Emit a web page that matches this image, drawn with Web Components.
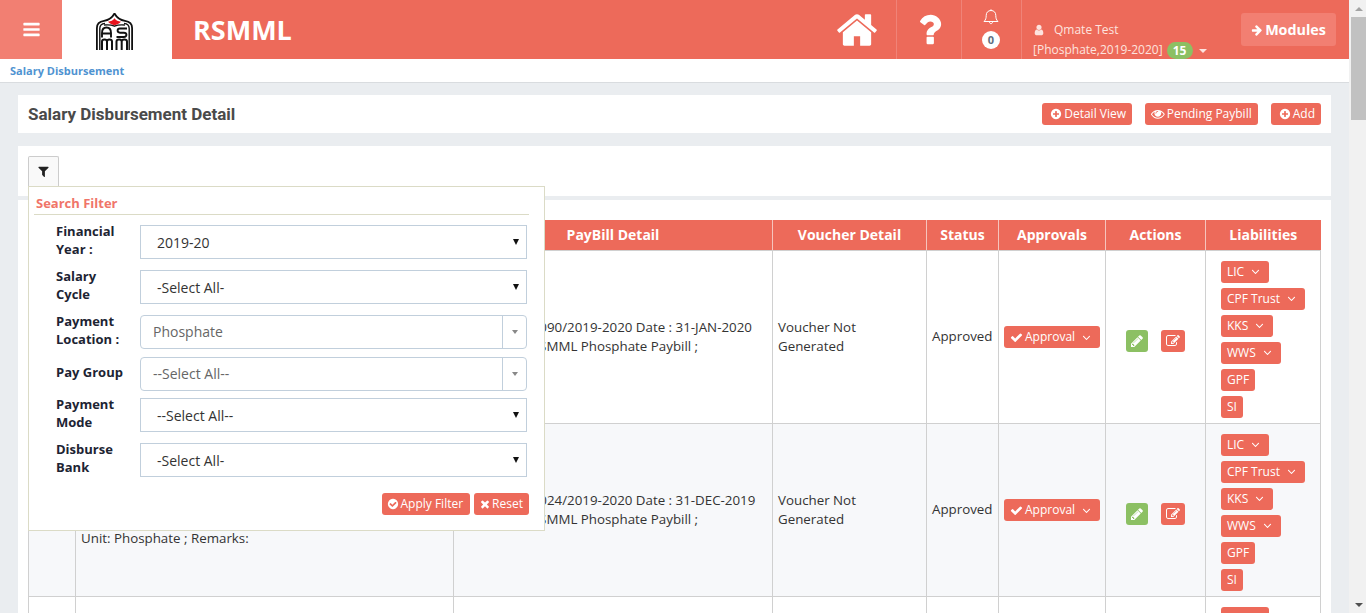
<!DOCTYPE html>
<html>
<head>
<meta charset="utf-8">
<title>Salary Disbursement</title>
<style>
  html, body { margin: 0; padding: 0; height: 100%; overflow: hidden; }
  body { font-family: "Open Sans", sans-serif; font-size: 13px; color: #333; }
</style>
</head>
<body>
<app-shell>
  <app-header></app-header>
  <crumb-bar>Salary Disbursement</crumb-bar>
  <page-body>
    <title-card></title-card>
    <filter-card></filter-card>
    <disbursement-table></disbursement-table>
  </page-body>
</app-shell>

<script>
// font awesome 4 style glyphs, all on a 1792 box
const ICONS = {
  bars: 'M1664 1344v128q0 26-19 45t-45 19h-1408q-26 0-45-19t-19-45v-128q0-26 19-45t45-19h1408q26 0 45 19t19 45zm0-512v128q0 26-19 45t-45 19h-1408q-26 0-45-19t-19-45v-128q0-26 19-45t45-19h1408q26 0 45 19t19 45zm0-512v128q0 26-19 45t-45 19h-1408q-26 0-45-19t-19-45v-128q0-26 19-45t45-19h1408q26 0 45 19t19 45z',
  home: 'M1472 992v480q0 26-19 45t-45 19h-384v-384h-256v384h-384q-26 0-45-19t-19-45v-480q0-1 .5-3t.5-3l575-474 575 474q1 2 1 6zm223-69l-62 74q-8 9-21 11h-3q-13 0-21-7l-692-577-692 577q-12 8-24 7-13-2-21-11l-62-74q-8-10-7-23.5t11-21.5l719-599q32-26 76-26t76 26l244 204v-195q0-14 9-23t23-9h192q14 0 23 9t9 23v408l219 182q10 8 11 21.5t-7 23.5z',
  question: 'M1088 1256v240q0 16-12 28t-28 12h-240q-16 0-28-12t-12-28v-240q0-16 12-28t28-12h240q16 0 28 12t12 28zm316-600q0 54-15.5 101t-35 76.5-55 59.5-57.5 43.5-61 35.5q-41 23-68.5 65t-27.5 67q0 17-12 32.5t-28 15.5h-240q-15 0-25.5-18.5t-10.5-37.5v-45q0-83 65-156.5t143-108.5q59-27 84-56t25-76q0-42-46.5-74t-107.5-32q-65 0-108 29-35 25-107 115-13 16-31 16-12 0-25-8l-164-125q-13-10-15.5-25t5.5-28q160-266 464-266 80 0 161 31t146 83 106 127.5 41 158.5z',
  user: 'M1536 1399q0 109-62.5 187t-150.5 78h-854q-88 0-150.5-78t-62.5-187q0-85 8.5-160.5t31.5-152 58.5-131 94-89 134.5-34.5q131 128 313 128t313-128q76 0 134.5 34.5t94 89 58.5 131 31.5 152 8.5 160.5zm-256-887q0 159-112.5 271.5t-271.5 112.5-271.5-112.5-112.5-271.5 112.5-271.5 271.5-112.5 271.5 112.5 112.5 271.5z',
  arrow: 'M1600 960q0 54-37 91l-651 651q-39 37-91 37-51 0-90-37l-75-75q-38-38-38-91t38-91l293-293h-704q-52 0-84.5-37.5t-32.5-90.5v-128q0-53 32.5-90.5t84.5-37.5h704l-293-294q-38-36-38-90t38-90l75-75q38-38 90-38 53 0 91 38l651 651q37 35 37 90z',
  plus: 'M1344 960v-128q0-26-19-45t-45-19h-256v-256q0-26-19-45t-45-19h-128q-26 0-45 19t-19 45v256h-256q-26 0-45 19t-19 45v128q0 26 19 45t45 19h256v256q0 26 19 45t45 19h128q26 0 45-19t19-45v-256h256q26 0 45-19t19-45zm320-64q0 209-103 385.5t-279.5 279.5-385.5 103-385.5-103-279.5-279.5-103-385.5 103-385.5 279.5-279.5 385.5-103 385.5 103 279.5 279.5 103 385.5z',
  eye: 'M1664 960q-152-236-381-353 61 104 61 225 0 185-131.5 316.5t-316.5 131.5-316.5-131.5-131.5-316.5q0-121 61-225-229 117-381 353 133 205 333.5 326.5t434.5 121.5 434.5-121.5 333.5-326.5zm-720-384q0-20-14-34t-34-14q-125 0-214.5 89.5t-89.5 214.5q0 20 14 34t34 14 34-14 14-34q0-86 61-147t147-61q20 0 34-14t14-34zm848 384q0 34-20 69-140 230-376.5 368.5t-499.5 138.5-499.5-139-376.5-368q-20-35-20-69t20-69q140-229 376.5-368t499.5-139 499.5 139 376.5 368q20 35 20 69z',
  filter: 'M1595 295q17 41-14 70l-493 493v742q0 42-39 59-13 5-25 5-27 0-45-19l-256-256q-19-19-19-45v-486l-493-493q-31-29-14-70 17-39 59-39h1280q42 0 59 39z',
  check: 'M1671 566q0 40-28 68l-724 724-136 136q-28 28-68 28t-68-28l-136-136-362-362q-28-28-28-68t28-68l136-136q28-28 68-28t68 28l294 295 656-657q28-28 68-28t68 28l136 136q28 28 28 68z',
  checkCircle: 'M1412 734q0-28-18-46l-91-90q-19-19-45-19t-45 19l-408 407-226-226q-19-19-45-19t-45 19l-91 90q-18 18-18 46 0 27 18 45l362 362q19 19 45 19 27 0 46-19l543-543q18-18 18-45zm252 162q0 209-103 385.5t-279.5 279.5-385.5 103-385.5-103-279.5-279.5-103-385.5 103-385.5 279.5-279.5 385.5-103 385.5 103 279.5 279.5 103 385.5z',
  times: 'M1490 1322q0 40-28 68l-136 136q-28 28-68 28t-68-28l-294-294-294 294q-28 28-68 28t-68-28l-136-136q-28-28-28-68t28-68l294-294-294-294q-28-28-28-68t28-68l136-136q28-28 68-28t68 28l294 294 294-294q28-28 68-28t68 28l136 136q28 28 28 68t-28 68l-294 294 294 294q28 28 28 68z',
  pencil: 'M491 1536l91-91-235-235-91 91v107h128v128h107zm523-928q0-22-22-22-10 0-17 7l-542 542q-7 7-7 17 0 22 22 22 10 0 17-7l542-542q7-7 7-17zm-54-192l416 416-832 832h-416v-416zm683 96q0 53-37 90l-166 166-416-416 166-165q36-38 90-38 53 0 91 38l235 234q37 39 37 91z',
  edit: 'M888 1184l116-116-152-152-116 116v56h96v96h56zm440-720q-16-16-33 1l-350 350q-17 17-1 33t33-1l350-350q17-17 1-33zm80 594v190q0 119-84.5 203.5t-203.5 84.5h-832q-119 0-203.5-84.5t-84.5-203.5v-832q0-119 84.5-203.5t203.5-84.5h832q63 0 117 25 15 7 18 23 3 17-9 29l-49 49q-14 14-32 8-23-6-45-6h-832q-66 0-113 47t-47 113v832q0 66 47 113t113 47h832q66 0 113-47t47-113v-126q0-13 9-22l64-64q15-15 35-7t20 29zm-96-738l288 288-672 672h-288v-288zm444 132l-92 92-288-288 92-92q28-28 68-28t68 28l152 152q28 28 28 68t-28 68z',
  angle: 'M1395 736q0 13-10 23l-466 466q-10 10-23 10t-23-10l-466-466q-10-10-10-23t10-23l50-50q10-10 23-10t23 10l393 393 393-393q10-10 23-10t23 10l50 50q10 10 10 23z'
};

function icon(name, size) {
  return '<svg width="' + size + '" height="' + size + '" viewBox="0 0 1792 1792" fill="currentColor" style="display:block;flex:none"><path d="' + ICONS[name] + '"/></svg>';
}

// wraps the header, breadcrumb and page, and draws the scrollbar next to them
class AppShell extends HTMLElement {
  constructor() {
    super();
    let shadow = this.attachShadow({mode: 'open'});
    shadow.innerHTML = `
      <style>
        :host { display: flex; height: 613px; overflow: hidden; }
        .main { width: 1349px; flex: none; display: flex; flex-direction: column; height: 613px; overflow: hidden; background: #eaedf0; }
        .bar { flex: 1; background: #f1f1f1; display: flex; flex-direction: column; align-items: flex-end; }
        .up, .down { width: 15px; height: 17px; display: flex; align-items: center; justify-content: center; }
        .up i, .down i { width: 0; height: 0; border-left: 4px solid transparent; border-right: 4px solid transparent; }
        .up i { border-bottom: 4px solid #a3a3a3; }
        .down i { border-top: 4px solid #505050; }
        .thumb { width: 15px; height: 103px; background: #c1c1c1; }
        .rest { flex: 1; }
      </style>
      <div class="main"><slot></slot></div>
      <div class="bar">
        <div class="up"><i></i></div>
        <div class="thumb"></div>
        <div class="rest"></div>
        <div class="down"><i></i></div>
      </div>`;
  }
}

class AppHeader extends HTMLElement {
  constructor() {
    super();
    let shadow = this.attachShadow({mode: 'open'});
    shadow.innerHTML = `
      <style>
        :host { display: flex; flex: none; height: 59px; background: #ed6a5a; color: #fff; align-items: stretch; overflow: hidden; }
        .burger { width: 62px; background: #f27f72; display: flex; align-items: center; justify-content: center; }
        .logo { width: 110px; box-sizing: border-box; padding: 4px 5px 0 0; background: #fff; display: flex; align-items: center; justify-content: center; }
        .brand { margin-left: 21px; font-size: 27px; font-weight: 700; line-height: 59px; flex: 1; }
        .cell { display: flex; align-items: center; justify-content: center; border-left: 1px solid #f08378; box-sizing: border-box; }
        .home { width: 79px; border-left: 0; }
        .help { width: 65px; }
        .bell { width: 60px; flex-direction: column; justify-content: flex-start; padding-top: 9px; }
        .count { width: 18px; height: 18px; border-radius: 50%; background: #fff; color: #5f6f82; font-size: 11px; font-weight: 700; line-height: 18px; text-align: center; margin-top: 6px; margin-left: -1px; }
        .user { width: 220px; display: block; padding: 21px 0 0 11px; font-size: 12px; line-height: 18px; color: #fde3df; overflow: hidden; white-space: nowrap; }
        .who { display: flex; align-items: center; }
        .who svg { margin-right: 9px; }
        .unit { display: flex; align-items: center; margin-top: 2px; }
        .badge { background: #8cc063; color: #fff; font-weight: 700; font-size: 12px; height: 17px; line-height: 17px; width: 26px; text-align: center; border-radius: 9px; margin-left: 4px; }
        .caret { width: 0; height: 0; border-left: 4px solid transparent; border-right: 4px solid transparent; border-top: 4px solid #fde3df; margin: 2px 0 0 6px; }
        .modules { width: 95px; height: 33px; margin: 13px 13px 0 0; background: #f27f72; border-radius: 3px; display: flex; align-items: center; justify-content: center; font-size: 14.300px; font-weight: 700; }
        .modules svg { margin-right: 2px; }
      </style>
      <div class="burger">${icon('bars', 19)}</div>
      <div class="logo">
        <svg width="37" height="37" viewBox="0 0 37 37" fill="none" stroke="#111" stroke-width="1.800">
          <path d="M.9 37V15C.9 10 4 8.300 8 7.800 12.500 7.200 16 5 18.500 .5 21 5 24.500 7.200 29 7.800 33 8.300 36.100 10 36.100 15V37"/>
          <path d="M3.800 37V15.500C3.800 12 6 10.700 9 10.400M33.200 37V15.500C33.200 12 31 10.700 28 10.400" stroke-width="1.400"/>
          <path d="M8 12C12 11.500 15.500 11.800 18.500 13.200 21.500 11.800 25 11.500 29 12" stroke-width="1.300"/>
          <path d="M12 8.800C15 8.400 17 7.500 18.500 5.300 20 7.500 22 8.400 25 8.800 23.500 10.600 20.500 11.800 18.500 12.200 16.500 11.800 13.500 10.600 12 8.800Z" fill="#e8121c" stroke="none"/>
          <path d="M6 24.500V20C6 15.500 8 14.500 10.500 14.500S15 15.500 15 20V24.500M6 20.500H15" stroke-width="1.900"/>
          <path d="M31 15.500H24C20.800 15.500 20.800 19.700 24 19.700H27.800C31.300 19.700 31.300 24 27.800 24H20.500" stroke-width="1.900"/>
          <path d="M6 37V28.500C6 25.800 11 25.800 11 28.500V37M11 28.500C11 25.800 16 25.800 16 28.500V37M20.500 37V28.500C20.500 25.800 25.700 25.800 25.700 28.500V37M25.700 28.500C25.700 25.800 31 25.800 31 28.500V37" stroke-width="2"/>
        </svg>
      </div>
      <div class="brand">RSMML</div>
      <div class="cell home">${icon('home', 44)}</div>
      <div class="cell help">${icon('question', 41)}</div>
      <div class="cell bell">
        <svg width="16" height="16" viewBox="0 0 16 16" fill="none" stroke="#fff" stroke-width="1" style="display:block;margin-left:-1px">
          <path d="M1 12.500C2.800 10.800 3.200 9 3.200 6.500 3.200 3.500 5 1.500 8 1.500S12.800 3.500 12.800 6.500C12.800 9 13.200 10.800 15 12.500Z"/>
          <path d="M6.500 13C6.500 15.200 9.500 15.200 9.500 13"/>
          <path d="M8 .3V1.500"/>
        </svg>
        <div class="count">0</div>
      </div>
      <div class="cell user">
        <div class="who">${icon('user', 12)}<span>Qmate Test</span></div>
        <div class="unit"><span>[Phosphate,2019-2020]</span><span class="badge">15</span><span class="caret"></span></div>
      </div>
      <div class="modules">${icon('arrow', 12)}<span>Modules</span></div>`;
  }
}

class CrumbBar extends HTMLElement {
  constructor() {
    super();
    let shadow = this.attachShadow({mode: 'open'});
    shadow.innerHTML = `
      <style>
        :host { display: block; flex: none; height: 23px; box-sizing: content-box; background: #fff; border-bottom: 1px solid #d9dcdf; padding-left: 10px; font-size: 11px; font-weight: 700; line-height: 24px; color: #4f93d1; }
      </style>
      <slot></slot>`;
  }
}

class PageBody extends HTMLElement {
  constructor() {
    super();
    let shadow = this.attachShadow({mode: 'open'});
    shadow.innerHTML = `
      <style>
        :host { display: flex; flex-direction: column; flex: 1; min-height: 0; padding: 12px 18px 0; }
      </style>
      <slot></slot>`;
  }
}

// coral button, icon name comes in as an attribute, label through the slot
class CoralBtn extends HTMLElement {
  constructor() {
    super();
    let shadow = this.attachShadow({mode: 'open'});
    let name = this.getAttribute('icon');
    let size = this.getAttribute('size') || 12;
    let menu = this.hasAttribute('menu');
    shadow.innerHTML = `
      <style>
        :host { display: inline-flex; align-items: center; height: 22px; box-sizing: border-box; padding: 0 ${menu ? 7 : 6}px 0 ${name ? 8 : 6}px; background: #ed6a5a; color: #fff; border-radius: 3px; font-size: 12px; line-height: 22px; white-space: nowrap; }
        :host([green]) { background: #8cc063; }
        svg { margin-right: var(--icon-gap, 2px); }
        .down { margin-left: 5px; }
        .down svg { margin: 0; }
      </style>
      ${name ? icon(name, size) : ''}<slot></slot>${menu ? '<span class="down">' + icon('angle', 13) + '</span>' : ''}`;
  }
}

class TitleCard extends HTMLElement {
  constructor() {
    super();
    let shadow = this.attachShadow({mode: 'open'});
    shadow.innerHTML = `
      <style>
        :host { display: flex; flex: none; height: 38px; background: #fff; align-items: center; padding: 0 10px; }
        h1 { flex: 1; margin: 0; font: 700 17px Roboto, sans-serif; color: #4a4a4a; }
        coral-btn { margin-left: 13px; }
        .eye { padding-left: 6px; }
      </style>
      <h1>Salary Disbursement Detail</h1>
      <coral-btn icon="plus">Detail View</coral-btn>
      <coral-btn class="eye" icon="eye" size="13.700">Pending Paybill</coral-btn>
      <coral-btn icon="plus">Add</coral-btn>`;
  }
}

// one row of the search filter, native look or the chosen look when "chosen" is set
class FilterField extends HTMLElement {
  constructor() {
    super();
    let shadow = this.attachShadow({mode: 'open'});
    shadow.innerHTML = `
      <style>
        :host { display: flex; align-items: flex-start; box-sizing: border-box; padding-left: 22px; }
        .label { width: 70px; margin-right: 14px; flex: none; font-size: 13px; font-weight: 700; line-height: 18px; color: #1d2433; margin-top: -3px; }
        :host([single]) .label { margin-top: 6px; }
        .box { width: 387px; height: 34px; box-sizing: border-box; border: 1px solid #c1cfdc; background: #fff; display: flex; align-items: center; font-size: 14px; color: #333; padding-left: 16px; }
        .box b { margin-left: auto; margin-right: 7px; width: 0; height: 0; border-left: 3.500px solid transparent; border-right: 3.500px solid transparent; border-top: 6px solid #111; }
        :host([chosen]) .box { border-radius: 4px; padding-left: 12px; color: #666; }
        :host([chosen]) .box span { margin-top: -2px; }
        :host([chosen]) .box b { display: none; }
        .arrow { display: none; margin-left: auto; width: 24px; height: 100%; box-sizing: border-box; border-left: 1px solid #c1cfdc; align-items: center; justify-content: center; }
        .arrow i { width: 0; height: 0; border-left: 3px solid transparent; border-right: 3px solid transparent; border-top: 4px solid #888; }
        :host([chosen]) .arrow { display: flex; }
      </style>
      <div class="label">${this.getAttribute('label')}</div>
      <div class="box"><span>${this.getAttribute('value')}</span><b></b><div class="arrow"><i></i></div></div>`;
  }
}

class FilterCard extends HTMLElement {
  constructor() {
    super();
    let shadow = this.attachShadow({mode: 'open'});
    shadow.innerHTML = `
      <style>
        :host { display: block; flex: none; position: relative; height: 50px; margin-top: 13px; background: #fff; padding: 10px 10px 0; box-sizing: border-box; z-index: 2; }
        .toggle { width: 31px; height: 30px; box-sizing: border-box; border: 1px solid #ccc; border-bottom: 0; border-radius: 2px 2px 0 0; background: #f9f9f9; color: #222; display: flex; align-items: center; justify-content: center; }
        .pop { position: absolute; left: 10px; top: 40px; width: 517px; height: 345px; box-sizing: border-box; background: #fff; border: 1px solid #dbdbc6; padding: 0 15px 0 5px; }
        .head { font-size: 13px; font-weight: 700; color: #f07569; line-height: 16px; padding: 8px 0 3px 2px; border-bottom: 1px solid #dbdbc6; height: 28px; box-sizing: border-box; margin-bottom: 10px; }
        filter-field { height: 45px; }
        filter-field.s42 { height: 42px; }
        filter-field.s41 { height: 41px; }
        .acts { display: flex; justify-content: flex-end; gap: 4px; margin-top: 5px; }
        .apply { padding: 0 7px 0 5px; }
        .reset { padding-left: 5px; --icon-gap: 1px; }
      </style>
      <div class="toggle">${icon('filter', 13)}</div>
      <div class="pop">
        <div class="head">Search Filter</div>
        <filter-field label="Financial Year :" value="2019-20"></filter-field>
        <filter-field label="Salary Cycle" value="-Select All-"></filter-field>
        <filter-field class="s42" label="Payment Location :" value="Phosphate" chosen></filter-field>
        <filter-field class="s41" label="Pay Group" value="--Select All--" chosen single></filter-field>
        <filter-field label="Payment Mode" value="--Select All--"></filter-field>
        <filter-field label="Disburse Bank" value="-Select All-"></filter-field>
        <div class="acts">
          <coral-btn class="apply" icon="checkCircle">Apply Filter</coral-btn>
          <coral-btn class="reset" icon="times">Reset</coral-btn>
        </div>
      </div>`;
  }
}

class DisbursementTable extends HTMLElement {
  constructor() {
    super();
    let shadow = this.attachShadow({mode: 'open'});
    const rows = [
      {no: 1, voucher: 'Voucher Not Generated', month: 'JAN-2020', bill: 'PayBill No : 1090', date: '31-JAN-2020'},
      {no: 2, voucher: 'Voucher Not Generated', month: 'DEC-2019', bill: 'PayBill No : 1024', date: '31-DEC-2019'},
      {no: 3, voucher: 'Voucher Not Generated', month: 'NOV-2019', bill: 'PayBill No : 0967', date: '30-NOV-2019'}
    ];
    const liabilities = [['LIC', 1], ['CPF Trust', 1], ['KKS', 1], ['WWS', 1], ['GPF', 0], ['SI', 0]];
    let body = '';
    rows.forEach(function (r) {
      let btns = liabilities.map(function (l) {
        return '<coral-btn' + (l[1] ? ' menu' : '') + '>' + l[0] + '</coral-btn>';
      }).join('');
      body += '<tr>' +
        '<td class="c">' + r.no + '</td>' +
        '<td>Disbursement Id: ' + r.no + ' ; Month: ' + r.month + '<br>Salary Cycle: Monthly ;<br>Payment Mode: Bank ;<br>Unit: Phosphate ; Remarks:</td>' +
        '<td>' + r.bill + '/2019-2020 Date : ' + r.date + '<br><span class="nm">Bill Name :</span> RSMML Phosphate Paybill ;</td>' +
        '<td>' + r.voucher + '</td>' +
        '<td>Approved</td>' +
        '<td class="c"><coral-btn class="ap" icon="check" size="13" menu>Approval</coral-btn></td>' +
        '<td class="c"><div class="acts"><coral-btn class="gr" green>' + icon('pencil', 14) + '</coral-btn><coral-btn class="rd">' + icon('edit', 14) + '</coral-btn></div></td>' +
        '<td class="lia"><div class="stack">' + btns + '</div></td>' +
        '</tr>';
    });
    shadow.innerHTML = `
      <style>
        :host { display: block; flex: 1; background: #fff; padding: 20px 10px 0; margin-top: 4px; font-size: 13.330px; line-height: 19px; color: #333; }
        table { border-collapse: collapse; table-layout: fixed; width: 1292px; }
        th { background: #ed6a5a; color: #fff; font-size: 14px; font-weight: 700; height: 30px; padding: 0 5px 1px; border: 1px solid #f6c4bd; border-top: 0; border-bottom: 1px solid #d0d0d0; box-sizing: border-box; }
        th:first-child { border-left: 0; }
        th:last-child { border-right: 0; }
        td { border: 1px solid #d0d0d0; padding: 5px; vertical-align: middle; }
        td.c { text-align: center; }
        tbody tr:nth-child(2) td { background: #f7f8fa; }
        td.lia { padding: 10px 5px 5px 15px; }
        .nm { margin-right: 2px; }
        .stack { display: flex; flex-direction: column; align-items: flex-start; gap: 5px; }
        coral-btn.ap { padding-left: 6px; margin-top: 2px; }
        coral-btn.gr { padding: 0 4px; }
        coral-btn.rd { padding: 0 5px; }
        .acts { display: flex; justify-content: center; gap: 13px; margin-top: 8px; }
        .acts svg { margin: 0; }
      </style>
      <table>
        <colgroup><col style="width:47px"><col style="width:378px"><col style="width:319px"><col style="width:154px"><col style="width:72px"><col style="width:107px"><col style="width:100px"><col style="width:115px"></colgroup>
        <thead><tr><th>#</th><th>Disbursement Detail</th><th>PayBill Detail</th><th>Voucher Detail</th><th>Status</th><th>Approvals</th><th>Actions</th><th>Liabilities</th></tr></thead>
        <tbody>${body}</tbody>
      </table>`;
  }
}

customElements.define('app-shell', AppShell);
customElements.define('app-header', AppHeader);
customElements.define('crumb-bar', CrumbBar);
customElements.define('page-body', PageBody);
customElements.define('coral-btn', CoralBtn);
customElements.define('title-card', TitleCard);
customElements.define('filter-field', FilterField);
customElements.define('filter-card', FilterCard);
customElements.define('disbursement-table', DisbursementTable);
</script>
</body>
</html>
